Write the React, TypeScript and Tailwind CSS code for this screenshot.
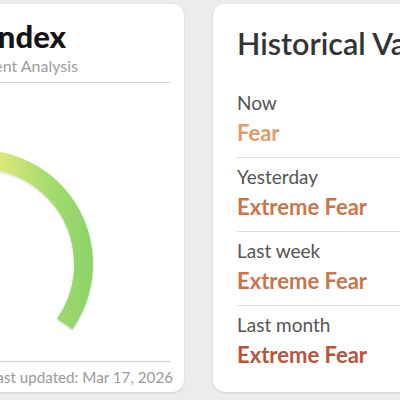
import React from "react";

const rows = [
  { label: "Now", value: "Fear", color: "text-[#dd9c6a]" },
  { label: "Yesterday", value: "Extreme Fear", color: "text-[#c9764a]" },
  { label: "Last week", value: "Extreme Fear", color: "text-[#c9764a]" },
  { label: "Last month", value: "Extreme Fear", color: "text-[#b6553c]" },
];

function Gauge() {
  // center of the dial in svg coords
  const cx = 195;
  const cy = 175;
  const r = 104.5;
  const a0 = (145 * Math.PI) / 180;
  const a1 = (35 * Math.PI) / 180;
  const x0 = cx + r * Math.cos(a0);
  const y0 = cy + r * Math.sin(a0);
  const x1 = cx + r * Math.cos(a1);
  const y1 = cy + r * Math.sin(a1);

  return (
    <svg width="400" height="270" viewBox="0 0 400 270" className="block">
      <defs>
        <linearGradient id="dial" x1="80" y1="0" x2="310" y2="0" gradientUnits="userSpaceOnUse">
          <stop offset="0" stopColor="#e2513d" />
          <stop offset="0.28" stopColor="#ef9a4a" />
          <stop offset="0.48" stopColor="#efe07a" />
          <stop offset="0.6" stopColor="#dbe779" />
          <stop offset="0.82" stopColor="#a2da6d" />
          <stop offset="1" stopColor="#8ad369" />
        </linearGradient>
        <filter id="soft" x="-10%" y="-10%" width="120%" height="120%">
          <feDropShadow dx="0" dy="1" stdDeviation="1.2" floodColor="#000" floodOpacity="0.18" />
        </filter>
      </defs>
      <path
        d={`M ${x0} ${y0} A ${r} ${r} 0 1 1 ${x1} ${y1}`}
        fill="none"
        stroke="url(#dial)"
        strokeWidth="19"
        filter="url(#soft)"
      />
    </svg>
  );
}

export default function App() {
  return (
    <div className="h-[400px] w-[400px] overflow-hidden bg-[#ececec] pt-[4px] font-['Lato',sans-serif]">
      <div className="flex gap-[29px]">
        <div className="ml-[-216px] flex h-[388px] w-[400px] shrink-0 flex-col rounded-xl bg-white px-[13px] pt-[15px] shadow-sm">
          <div className="mr-[105px] whitespace-nowrap text-right text-[31px] font-black leading-[34px] text-[#141414]">
            Fear &amp; Greed Index
          </div>
          <div className="mr-[93px] mt-[3px] whitespace-nowrap text-right text-[16px] leading-[20px] text-[#9d9d9d]">
            Market Sentiment Analysis
          </div>
          <div className="mt-[6px] h-px bg-[#d2d2d2]" />
          <div className="ml-[-13px] mt-[6px]">
            <Gauge />
          </div>
          <div className="mt-[2px] h-px bg-[#d2d2d2]" />
          <div className="mr-[-2px] mt-[5px] whitespace-nowrap text-right text-[15.2px] leading-[20px] text-[#9a9a9a]">
            Last updated: Mar 17, 2026
          </div>
        </div>

        <div className="flex h-[388px] w-[300px] shrink-0 flex-col rounded-xl bg-white pl-[24px] pt-[21px] shadow-sm">
          <div className="whitespace-nowrap text-[30.5px] font-semibold leading-[36px] text-[#333333]">
            Historical Values
          </div>
          <div className="mt-[23px] flex flex-col">
            {rows.map((row, i) => (
              <div
                key={row.label}
                className={i === 0 ? "pt-[7px] pb-[10px]" : "border-t border-[#dddddd] pt-[7px] pb-[10px]"}
              >
                <div className="text-[19px] leading-[24px] text-[#555555]">{row.label}</div>
                <div className={`mt-[4px] text-[22px] font-bold leading-[28px] ${row.color}`}>{row.value}</div>
              </div>
            ))}
          </div>
        </div>
      </div>
    </div>
  );
}
